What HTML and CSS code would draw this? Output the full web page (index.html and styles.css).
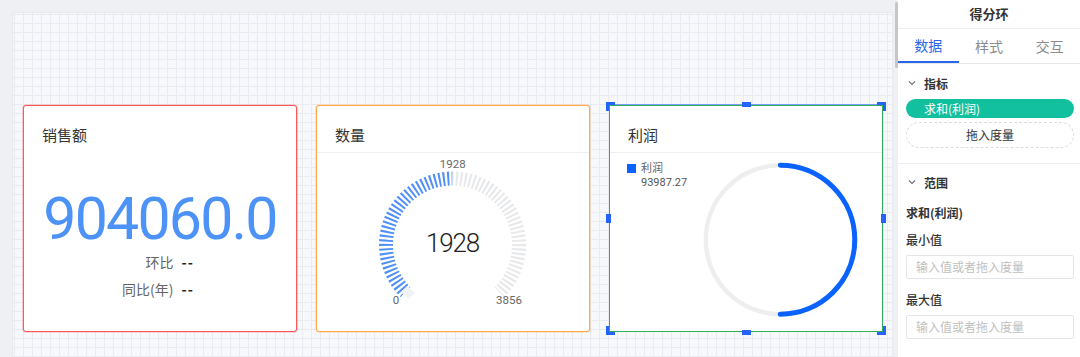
FILE: index.html
```html
<!DOCTYPE html>
<html lang="zh-CN">
<head>
<meta charset="utf-8">
<title>得分环</title>
<link rel="stylesheet" href="styles.css">
</head>
<body>
<div class="app">
  <main class="stage">
    <div class="canvas">
      <div class="cards">
        <section class="card card-kpi">
          <div class="card-head no-line">销售额</div>
          <div class="kpi-body">
            <div class="kpi-value">904060.0</div>
            <div class="kpi-compare">
              <span class="cmp-label">环比</span><span class="cmp-val">--</span>
              <span class="cmp-label">同比(年)</span><span class="cmp-val">--</span>
            </div>
          </div>
        </section>

        <section class="card card-gauge">
          <div class="card-head">数量</div>
          <svg class="chart" width="272" height="178" viewBox="0 0 272 178">
            <path class="tick-blue" d="M 88.48 139.02 A 66.5 66.5 0 0 1 135.5 25.5" />
            <path class="tick-gray" d="M 135.5 25.5 A 66.5 66.5 0 0 1 182.52 139.02" />
            <rect class="tick-start" x="86" y="135" width="10" height="9" transform="rotate(45 91 139.5)" />
            <text class="g-label" x="135.7" y="15">1928</text>
            <text class="g-label" x="79" y="151">0</text>
            <text class="g-label" x="192" y="151">3856</text>
            <text class="g-value" x="135.5" y="99">1928</text>
          </svg>
        </section>

        <section class="card card-ring">
          <div class="card-head">利润</div>
          <div class="ring-body">
            <svg class="chart" width="273" height="178" viewBox="0 0 273 178">
              <circle class="ring-track" cx="170.3" cy="86.7" r="74.5" />
              <path class="ring-value" d="M 170.3 12.2 A 74.5 74.5 0 0 1 170.3 161.2" />
            </svg>
            <div class="legend">
              <span class="legend-dot"></span>
              <div class="legend-text">
                <div>利润</div>
                <div class="legend-num">93987.27</div>
              </div>
            </div>
          </div>
          <span class="h h-tl"></span>
          <span class="h h-tr"></span>
          <span class="h h-bl"></span>
          <span class="h h-br"></span>
          <span class="m m-t"></span>
          <span class="m m-b"></span>
          <span class="m m-l"></span>
          <span class="m m-r"></span>
        </section>
      </div>
    </div>
  </main>

  <div class="scroll"><div class="thumb"></div></div>

  <aside class="panel">
    <div class="panel-title">得分环</div>
    <nav class="tabs">
      <span class="tab active">数据</span>
      <span class="tab">样式</span>
      <span class="tab">交互</span>
    </nav>

    <div class="sec">
      <div class="sec-head">
        <svg class="chev" width="8" height="6" viewBox="0 0 8 6"><polyline points="1,1.5 4,4.5 7,1.5" /></svg>
        <span>指标</span>
      </div>
      <div class="pill">求和(利润)</div>
      <div class="drop">拖入度量</div>
    </div>

    <div class="sec sec-range">
      <div class="sec-head">
        <svg class="chev" width="8" height="6" viewBox="0 0 8 6"><polyline points="1,1.5 4,4.5 7,1.5" /></svg>
        <span>范围</span>
      </div>
      <div class="field-title">求和(利润)</div>
      <div class="field-label">最小值</div>
      <div class="input">输入值或者拖入度量</div>
      <div class="field-label gap">最大值</div>
      <div class="input">输入值或者拖入度量</div>
    </div>
  </aside>
</div>
</body>
</html>
```

FILE: styles.css
```css
html, body {
  margin: 0;
  padding: 0;
}

body {
  background: #eef0f3;
  font-family: "Noto Sans CJK SC", "Noto Sans", sans-serif;
  color: #333;
  overflow: hidden;
}

.app {
  display: flex;
  height: 357px;
  overflow: hidden;
}

.stage {
  flex: 0 0 892px;
  box-sizing: border-box;
  padding: 13px 0 0 13px;
}

.canvas {
  height: 400px;
  background-color: #f7f8fb;
  background-image:
    linear-gradient(#e9ebf0 1px, transparent 1px),
    linear-gradient(90deg, #e9ebf0 1px, transparent 1px);
  background-size: 9px 9px;
  background-position: 1px 1px;
  box-shadow: 0 0 2px rgba(0, 0, 0, 0.08);
}

.cards {
  display: flex;
  gap: 19px;
  padding: 92px 0 0 10px;
}

.card {
  position: relative;
  box-sizing: border-box;
  width: 274px;
  height: 227px;
  background: #fff;
  border: 1px solid #ddd;
  border-radius: 3px;
  display: flex;
  flex-direction: column;
}

.card-kpi {
  border-color: #ff5656;
  box-shadow: 0 0 0 0.6px rgba(255, 86, 86, 0.45);
}
.card-gauge {
  border-color: #ffa845;
  box-shadow: 0 0 0 0.6px rgba(255, 168, 69, 0.45);
}
.card-ring {
  border-color: #30ad5a;
  border-radius: 0;
  box-shadow: 0 -1px 0 0 rgba(47, 107, 255, 0.6);
}

.card-head {
  box-sizing: border-box;
  height: 47px;
  flex: 0 0 47px;
  padding: 19px 0 0 18px;
  font-size: 15px;
  line-height: 20px;
  color: #333;
  border-bottom: 1px solid #eeeff2;
}

.card-head.no-line {
  border-bottom-color: transparent;
}

/* KPI card */
.kpi-body {
  display: flex;
  flex-direction: column;
  align-items: center;
  padding-top: 36px;
}

.kpi-value {
  font-family: Roboto, "Liberation Sans", sans-serif;
  font-weight: 400;
  font-size: 59px;
  line-height: 60px;
  letter-spacing: -1.8px;
  color: #4d93f7;
}

.kpi-compare {
  margin-top: 2px;
  display: grid;
  grid-template-columns: auto auto;
  column-gap: 8px;
  row-gap: 5px;
  font-size: 14px;
  line-height: 22px;
  margin-left: -4px;
}

.cmp-label {
  text-align: right;
  color: #666;
}

.cmp-val {
  color: #222;
  font-weight: 700;
  letter-spacing: 1px;
}

/* gauge */
.chart {
  display: block;
}

.tick-blue,
.tick-gray {
  fill: none;
  stroke-width: 14;
  stroke-dasharray: 2 2.352;
  stroke-dashoffset: 1;
}

.tick-blue { stroke: #4f8ff7; }
.tick-gray { stroke: #e7e8ea; }

.tick-start { fill: #f0f2f6; }

.g-label {
  font-family: Roboto, "Liberation Sans", sans-serif;
  font-size: 11.5px;
  fill: #666;
  text-anchor: middle;
}

.g-value {
  font-family: Roboto, "Liberation Sans", sans-serif;
  font-weight: 300;
  font-size: 26px;
  letter-spacing: -1.2px;
  fill: #222;
  text-anchor: middle;
}

/* ring card */
.ring-body {
  display: grid;
}

.ring-body > * {
  grid-area: 1 / 1;
}

.ring-track {
  fill: none;
  stroke: #eeeeee;
  stroke-width: 4.5;
}

.ring-value {
  fill: none;
  stroke: #0b63ff;
  stroke-width: 5;
  stroke-linecap: round;
}

.legend {
  align-self: start;
  justify-self: start;
  display: flex;
  align-items: flex-start;
  gap: 5px;
  padding: 7px 0 0 17px;
  font-size: 11px;
  line-height: 15px;
  color: #666;
}

.legend-dot {
  width: 9px;
  height: 9px;
  margin-top: 4px;
  background: #0b63ff;
}

.legend-num {
  font-family: Roboto, "Liberation Sans", sans-serif;
  font-size: 11px;
  color: #555;
}

/* selection handles */
.h {
  position: absolute;
  box-sizing: border-box;
  width: 9px;
  height: 9px;
  border: 0 solid #2563ff;
}
.h-tl { left: -4px; top: -4px; border-top-width: 3px; border-left-width: 3px; }
.h-tr { right: -4px; top: -4px; border-top-width: 3px; border-right-width: 3px; }
.h-bl { left: -4px; bottom: -4px; border-bottom-width: 3px; border-left-width: 3px; }
.h-br { right: -4px; bottom: -4px; border-bottom-width: 3px; border-right-width: 3px; }

.m {
  position: absolute;
  background: #2563ff;
}
.m-t, .m-b {
  width: 9px;
  height: 5px;
  left: 50%;
  margin-left: -4.5px;
}
.m-t { top: -4px; }
.m-b { bottom: -4px; }
.m-l, .m-r {
  width: 5px;
  height: 9px;
  top: 50%;
  margin-top: -4.5px;
}
.m-l { left: -4px; }
.m-r { right: -4px; }

/* scrollbar */
.scroll {
  flex: 0 0 6px;
}

.thumb {
  margin: 2px 0 0 3px;
  width: 3px;
  height: 66px;
  border-radius: 2px;
  background: #c4c6ca;
}

/* panel */
.panel {
  flex: 0 0 182px;
  background: #fff;
  font-size: 12px;
}

.panel-title {
  height: 29px;
  line-height: 28px;
  box-sizing: border-box;
  border-bottom: 1px solid #eceef1;
  text-align: center;
  font-size: 13px;
  font-weight: 600;
  color: #333;
}

.tabs {
  display: grid;
  grid-template-columns: repeat(3, 1fr);
  height: 35px;
  box-sizing: border-box;
  border-bottom: 1px solid #e6e8eb;
}

.tab {
  text-align: center;
  font-size: 14px;
  line-height: 34px;
  color: #8c8c8c;
  box-sizing: border-box;
}

.tab.active {
  color: #2b66e8;
  border-bottom: 2px solid #2b66e8;
  line-height: 32px;
}

.sec {
  padding: 9px 6px 15px 8px;
  border-bottom: 1px solid #eceef1;
}

.sec-range {
  padding-top: 8px;
  border-bottom: 0;
}

.sec-head {
  display: flex;
  align-items: center;
  height: 20px;
  font-size: 12px;
  font-weight: 600;
  color: #333;
}

.chev {
  margin: 0 8px 0 2px;
  fill: none;
  stroke: #777;
  stroke-width: 1.2;
}

.pill {
  margin-top: 6px;
  height: 19px;
  line-height: 19px;
  border-radius: 10px;
  background: #12bf9f;
  color: #fff;
  font-size: 12px;
  padding-left: 18px;
}

.drop {
  margin-top: 4px;
  height: 26px;
  line-height: 24px;
  box-sizing: border-box;
  border: 1px dashed #dadcdf;
  border-radius: 13px;
  text-align: center;
  font-size: 12px;
  color: #333;
}

.field-title {
  margin-top: 11px;
  line-height: 20px;
  font-weight: 700;
  color: #333;
}

.field-label {
  margin-top: 7px;
  line-height: 20px;
  font-weight: 500;
  color: #333;
}

.field-label.gap {
  margin-top: 11px;
}

.input {
  margin-top: 5px;
  height: 24px;
  line-height: 22px;
  box-sizing: border-box;
  border: 1px solid #e3e5e9;
  border-radius: 2px;
  padding-left: 9px;
  color: #bfbfbf;
  font-size: 12px;
}
```
